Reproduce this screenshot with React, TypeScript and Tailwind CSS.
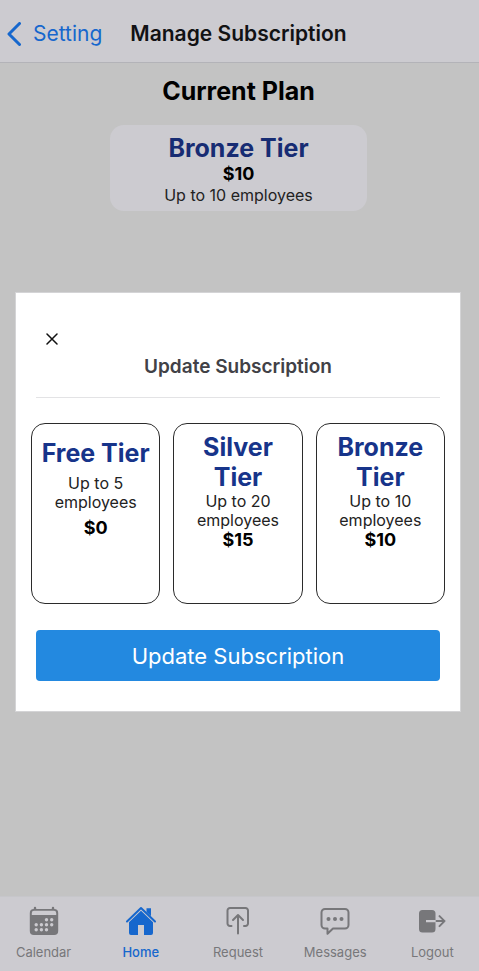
import React from "react";

type Plan = { name: string; limit: string; price: string; roomy?: boolean };

const plans: Plan[] = [
  { name: "Free Tier", limit: "Up to 5 employees", price: "$0", roomy: true },
  { name: "Silver Tier", limit: "Up to 20 employees", price: "$15" },
  { name: "Bronze Tier", limit: "Up to 10 employees", price: "$10" },
];

function CalendarIcon() {
  return (
    <svg viewBox="0 0 32 32" className="h-8 w-8" fill="none" aria-hidden="true">
      <path d="M7 3v4M25 3v4" stroke="currentColor" strokeWidth="2.4" strokeLinecap="round" />
      <rect x="1.800" y="4" width="28.400" height="26" rx="4" fill="currentColor" />
      <path d="M3.800 10V8A2.200 2.200 0 0 1 6 5.800h20A2.200 2.200 0 0 1 28.200 8v2z" fill="#cccbd0" />
      <g fill="#cccbd0">
        <circle cx="18.500" cy="14.800" r="1.700" />
        <circle cx="23.700" cy="14.800" r="1.700" />
        <circle cx="8.200" cy="19.800" r="1.700" />
        <circle cx="13.400" cy="19.800" r="1.700" />
        <circle cx="18.500" cy="19.800" r="1.700" />
        <circle cx="23.700" cy="19.800" r="1.700" />
        <circle cx="8.200" cy="24.800" r="1.700" />
        <circle cx="13.400" cy="24.800" r="1.700" />
        <circle cx="18.500" cy="24.800" r="1.700" />
      </g>
    </svg>
  );
}

function HomeIcon() {
  return (
    <svg viewBox="0 0 32 32" className="h-8 w-8" fill="none" aria-hidden="true">
      <path d="M21.500 7V3.200H26V11.200z" fill="currentColor" />
      <path d="M2 16.500 16 3l14 13.500" stroke="currentColor" strokeWidth="2" strokeLinecap="round" strokeLinejoin="round" />
      <path d="M16 5.800 28 17.200V28a2 2 0 0 1-2 2H19V20h-6v10H6a2 2 0 0 1-2-2V17.200z" fill="currentColor" />
    </svg>
  );
}

function RequestIcon() {
  return (
    <svg viewBox="0 0 32 32" className="h-8 w-8" fill="none" stroke="currentColor" strokeWidth="2" strokeLinecap="round" strokeLinejoin="round" aria-hidden="true">
      <path d="M9.500 21H8a2.500 2.500 0 0 1-2.500-2.500v-13A2.500 2.500 0 0 1 8 3h15.500A2.500 2.500 0 0 1 26 5.500v13a2.500 2.500 0 0 1-2.500 2.500H22" />
      <path d="M16 28.500V10.500M11 15l5-5 5 5" />
    </svg>
  );
}

function MessagesIcon() {
  return (
    <svg viewBox="0 0 32 32" className="h-8 w-8" fill="none" aria-hidden="true">
      <path
        d="M6 4h20a3.500 3.500 0 0 1 3.500 3.500v12.500a3.500 3.500 0 0 1-3.500 3.500H14L8.500 28.800V23.500H6A3.500 3.500 0 0 1 2.500 20V7.500A3.500 3.500 0 0 1 6 4z"
        stroke="currentColor"
        strokeWidth="2"
        strokeLinejoin="round"
      />
      <circle cx="9.500" cy="14" r="2" fill="currentColor" />
      <circle cx="16" cy="14" r="2" fill="currentColor" />
      <circle cx="22.500" cy="14" r="2" fill="currentColor" />
    </svg>
  );
}

function LogoutIcon() {
  return (
    <svg viewBox="0 0 32 32" className="h-8 w-8" fill="none" aria-hidden="true">
      <path d="M6.500 5h9.500a3.500 3.500 0 0 1 3.500 3.500v6.500H10v2.200h9.500v6.800a3.500 3.500 0 0 1-3.500 3.500H6.500A3.500 3.500 0 0 1 3 24V8.500A3.500 3.500 0 0 1 6.500 5z" fill="currentColor" />
      <path d="M20.500 16.100h8M23.500 11.100l5 5-5 5" stroke="currentColor" strokeWidth="2" strokeLinecap="round" strokeLinejoin="round" />
    </svg>
  );
}

const tabs = [
  { label: "Calendar", Icon: CalendarIcon },
  { label: "Home", Icon: HomeIcon, active: true },
  { label: "Request", Icon: RequestIcon },
  { label: "Messages", Icon: MessagesIcon },
  { label: "Logout", Icon: LogoutIcon },
];

function PlanCard({ plan }: { plan: Plan }) {
  return (
    <button
      type="button"
      className={`flex h-[181px] min-w-0 flex-1 flex-col items-center rounded-[14px] border border-[#2b2b2b] text-center ${plan.roomy ? "gap-[6px] pt-[14px]" : "pt-2"}`}
    >
      <span className="px-2 text-[25px] leading-[30px] font-bold text-[#17348a]">{plan.name}</span>
      <span className="px-4 text-base leading-[19px] text-[#222222]">{plan.limit}</span>
      <span className="text-lg leading-5 font-bold text-black">{plan.price}</span>
    </button>
  );
}

export default function App() {
  return (
    <div className="relative flex min-h-screen flex-col bg-[#c3c3c3] font-['Inter','Liberation_Sans',sans-serif] text-black">
      <header className="flex h-[63px] items-center border-b border-[#b3b3b8] bg-[#cccbd0] px-[7px] pt-[6px]">
        <a href="#setting" className="flex items-center gap-3 text-[21px] leading-7 text-[#1667cd]">
          <svg viewBox="0 0 14 24" className="h-6 w-[14px]" fill="none" aria-hidden="true">
            <path d="M12.500 1.500 2 12l10.500 10.500" stroke="currentColor" strokeWidth="3" strokeLinecap="round" strokeLinejoin="round" />
          </svg>
          Setting
        </a>
        <h1 className="ml-7 text-[21px] leading-7 font-semibold text-[#121214]">Manage Subscription</h1>
      </header>

      <main className="flex flex-1 flex-col items-center pt-3 pr-[2px]">
        <h2 className="text-[25px] leading-8 font-bold">Current Plan</h2>
        <section className="mt-[18px] flex h-[86px] w-[54%] flex-col items-center rounded-[14px] bg-[#cccbd0] pt-2">
          <h3 className="text-[25px] leading-[30px] font-bold text-[#172c73]">Bronze Tier</h3>
          <p className="text-lg leading-[22px] font-bold">$10</p>
          <p className="text-base leading-5 text-[#222222]">Up to 10 employees</p>
        </section>
      </main>

      <nav className="h-[75px] overflow-hidden border-t border-[#c6c6ca] bg-[#cccbd0]">
        <div className="-mr-[2px] -ml-[5px] grid grid-cols-5">
          {tabs.map(({ label, Icon, active }) => (
            <a
              key={label}
              href={`#${label.toLowerCase()}`}
              className={`flex flex-col items-center gap-[7px] pt-2 text-[13px] leading-4 ${active ? "font-medium text-[#1667cd]" : "text-[#77777a]"}`}
            >
              <Icon />
              {label}
            </a>
          ))}
        </div>
      </nav>

      <div className="absolute inset-x-0 top-[292px] pr-[18px] pl-[15px]">
        <div role="dialog" aria-modal="true" aria-labelledby="dialog-title" className="border border-[#d4d4d6] bg-white pt-[38px] pb-[30px]">
          <div className="mx-5 border-b border-[#e3e3e5] pb-[18px]">
            <button type="button" aria-label="Close" className="ml-2 flex h-4 w-4 items-center justify-center">
              <svg viewBox="0 0 12 12" className="h-3 w-3" fill="none" stroke="#111111" strokeWidth="1.500" strokeLinecap="round" aria-hidden="true">
                <path d="M1 1l10 10M11 1 1 11" />
              </svg>
            </button>
            <h2 id="dialog-title" className="mt-2 text-center text-[19px] leading-6 font-semibold text-[#414146]">
              Update Subscription
            </h2>
          </div>
          <div className="mx-[15px] mt-[25px] flex gap-[13px]">
            {plans.map((plan) => (
              <PlanCard key={plan.name} plan={plan} />
            ))}
          </div>
          <div className="mx-5 mt-[26px]">
            <button type="button" className="h-[51px] w-full rounded-[4px] bg-[#2389e0] text-[22px] leading-7 text-white">
              Update Subscription
            </button>
          </div>
        </div>
      </div>
    </div>
  );
}
